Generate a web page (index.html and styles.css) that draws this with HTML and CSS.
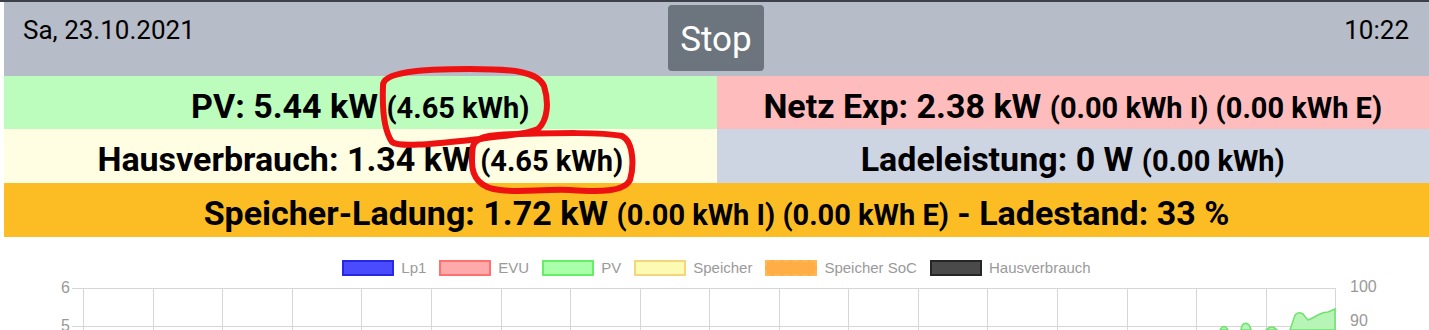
FILE: index.html
```html
<!DOCTYPE html>
<html lang="de">
<head>
    <meta charset="UTF-8">
    <meta name="viewport" content="width=device-width, initial-scale=1.0">
    <title>openWB Übersicht</title>
    <link rel="stylesheet" href="styles.css">
</head>
<body>
    <div class="page">
        <!-- Kopfzeile mit Datum, Stop-Knopf und Uhrzeit -->
        <header class="topbar">
            <span class="date">Sa, 23.10.2021</span>
            <button type="button" class="stop-button">Stop</button>
            <span class="time">10:22</span>
        </header>

        <!-- Leistungswerte -->
        <div class="tiles">
            <div class="tile tile-pv">PV: 5.44 kW <small>(4.65 kWh)</small></div>
            <div class="tile tile-netz">Netz Exp: 2.38 kW <small>(0.00 kWh I) (0.00 kWh E)</small></div>
            <div class="tile tile-haus">Hausverbrauch: 1.34 kW <small>(4.65 kWh)</small></div>
            <div class="tile tile-lade">Ladeleistung: 0 W <small>(0.00 kWh)</small></div>
            <div class="tile tile-speicher">Speicher-Ladung: 1.72 kW <small>(0.00 kWh I) (0.00 kWh E)</small> - Ladestand: 33 %</div>
        </div>

        <!-- Diagramm -->
        <div class="chart">
            <div class="legend">
                <span class="legend-item"><i class="swatch swatch-lp1"></i>Lp1</span>
                <span class="legend-item"><i class="swatch swatch-evu"></i>EVU</span>
                <span class="legend-item"><i class="swatch swatch-pv"></i>PV</span>
                <span class="legend-item"><i class="swatch swatch-speicher"></i>Speicher</span>
                <span class="legend-item"><i class="swatch swatch-soc"></i>Speicher SoC</span>
                <span class="legend-item"><i class="swatch swatch-haus"></i>Hausverbrauch</span>
            </div>
            <svg class="plot" width="1425" height="64" viewBox="0 0 1425 64">
                <g class="grid">
                    <line x1="68" y1="12.5" x2="1332" y2="12.5"/>
                    <line x1="68" y1="50.5" x2="1332" y2="50.5"/>
                    <line x1="79.5" y1="12" x2="79.5" y2="64"/>
                    <line x1="149.5" y1="12" x2="149.5" y2="64"/>
                    <line x1="218.5" y1="12" x2="218.5" y2="64"/>
                    <line x1="288.5" y1="12" x2="288.5" y2="64"/>
                    <line x1="357.5" y1="12" x2="357.5" y2="64"/>
                    <line x1="427.5" y1="12" x2="427.5" y2="64"/>
                    <line x1="497.5" y1="12" x2="497.5" y2="64"/>
                    <line x1="566.5" y1="12" x2="566.5" y2="64"/>
                    <line x1="636.5" y1="12" x2="636.5" y2="64"/>
                    <line x1="705.5" y1="12" x2="705.5" y2="64"/>
                    <line x1="775.5" y1="12" x2="775.5" y2="64"/>
                    <line x1="844.5" y1="12" x2="844.5" y2="64"/>
                    <line x1="914.5" y1="12" x2="914.5" y2="64"/>
                    <line x1="983.5" y1="12" x2="983.5" y2="64"/>
                    <line x1="1053.5" y1="12" x2="1053.5" y2="64"/>
                    <line x1="1123.5" y1="12" x2="1123.5" y2="64"/>
                    <line x1="1192.5" y1="12" x2="1192.5" y2="64"/>
                    <line x1="1262.5" y1="12" x2="1262.5" y2="64"/>
                    <line x1="1331.5" y1="12" x2="1331.5" y2="64"/>
                </g>
                <g class="pv-area">
                    <path d="M1216 54 Q1220 47 1224 54 Z"/>
                    <path d="M1237 54 C1238 45 1245 45 1247 54 Z"/>
                    <path d="M1262 54 Q1268 48 1273 54 Z"/>
                    <path d="M1286 54 L1291 39 Q1294 35 1299 38 Q1302 42 1304 44 Q1309 42 1314 39 Q1319 36 1324 36 L1331 33 L1331 54 Z"/>
                </g>
                <g class="axis-left">
                    <text x="66" y="17">6</text>
                    <text x="66" y="55">5</text>
                </g>
                <g class="axis-right">
                    <text x="1346" y="16">100</text>
                    <text x="1346" y="50">90</text>
                </g>
            </svg>
        </div>

        <!-- rote Markierungen aus dem Screenshot -->
        <svg class="marks" width="1429" height="240" viewBox="0 0 1429 240">
            <path d="M383 84 C382 70 420 67 470 67 C515 67 538 70 544 84 C549 100 548 118 538 127 C522 134 500 133 480 137 C440 141 400 146 392 140 C385 130 382 110 383 84 Z"/>
            <path d="M474 142 C478 134 495 132 520 132 C560 131 600 130 622 134 C634 140 634 165 630 178 C624 190 600 190 570 188 C540 187 520 191 500 188 C480 186 472 175 472 160 C472 150 472 145 474 142 Z"/>
        </svg>
    </div>
</body>
</html>
```

FILE: styles.css
```css
body {
    margin: 0;
    padding: 0;
    border-top: 2px solid #3d4048;
    background: #fff;
    font-family: Roboto, "Liberation Sans", sans-serif;
    color: #000;
}

.page {
    position: relative;
    padding-left: 4px;
}

/* Kopfzeile */
.topbar {
    display: grid;
    grid-template-columns: 1fr auto 1fr;
    align-items: start;
    height: 74px;
    box-sizing: border-box;
    padding: 3px 20px 0 19px;
    background-color: #b7bcc9;
}

.date,
.time {
    font-size: 26px;
    margin-top: 10px;
}

.time {
    justify-self: end;
}

.stop-button {
    height: 66px;
    padding: 3px 12px 0 12px;
    border: none;
    border-radius: 4px;
    background-color: #6c757d;
    color: #fff;
    font-family: Roboto, "Liberation Sans", sans-serif;
    font-size: 35px;
}

/* Kacheln mit Leistungswerten */
.tiles {
    display: grid;
    grid-template-columns: 1fr 1fr;
}

.tile {
    height: 54px;
    box-sizing: border-box;
    padding-top: 10px;
    line-height: 40px;
    text-align: center;
    font-size: 34px;
    font-weight: bold;
    white-space: nowrap;
}

.tile small {
    font-size: 29px;
}

.tile-pv {
    height: 53px;
    background-color: #bcfcbc;
}

.tile-netz {
    height: 53px;
    background-color: #ffbcbc;
}

.tile-haus {
    background-color: #fffde2;
}

.tile-lade {
    background-color: #cdd4e2;
}

.tile-speicher {
    grid-column: 1 / 3;
    background-color: #fbbd23;
}

/* Diagramm */
.chart {
    padding-top: 23px;
    font-family: "Liberation Sans", Arial, sans-serif;
}

.legend {
    display: flex;
    justify-content: center;
    gap: 13px;
    height: 16px;
    font-size: 15px;
    line-height: 16px;
    color: #9a9a9a;
}

.legend-item {
    display: flex;
    align-items: center;
}

.swatch {
    width: 52px;
    height: 16px;
    box-sizing: border-box;
    margin-right: 7px;
    border: 2px solid;
}

.swatch-lp1 {
    background-color: #4a4aff;
    border-color: #2727e6;
}

.swatch-evu {
    background-color: #ffaaaa;
    border-color: #ff7070;
}

.swatch-pv {
    background-color: #aaffaa;
    border-color: #66ee66;
}

.swatch-speicher {
    background-color: #fbfbb4;
    border-color: #f5d67c;
}

.swatch-soc {
    background-color: #ffae45;
    border: 2px dashed #ffb757;
}

.swatch-haus {
    background-color: #4a4a4a;
    border-color: #262626;
}

.plot {
    display: block;
}

.grid line {
    stroke: #d6d6d6;
    stroke-width: 1;
}

.pv-area path {
    fill: #b7f5b7;
    stroke: #6fe26f;
    stroke-width: 1.5;
}

.plot text {
    font-size: 16px;
    fill: #999;
}

.axis-left text {
    text-anchor: end;
}

/* Markierungen */
.marks {
    position: absolute;
    top: 0;
    left: 0;
    pointer-events: none;
}

.marks path {
    fill: none;
    stroke: #ee1111;
    stroke-width: 6;
    stroke-linecap: round;
    stroke-linejoin: round;
}
```
